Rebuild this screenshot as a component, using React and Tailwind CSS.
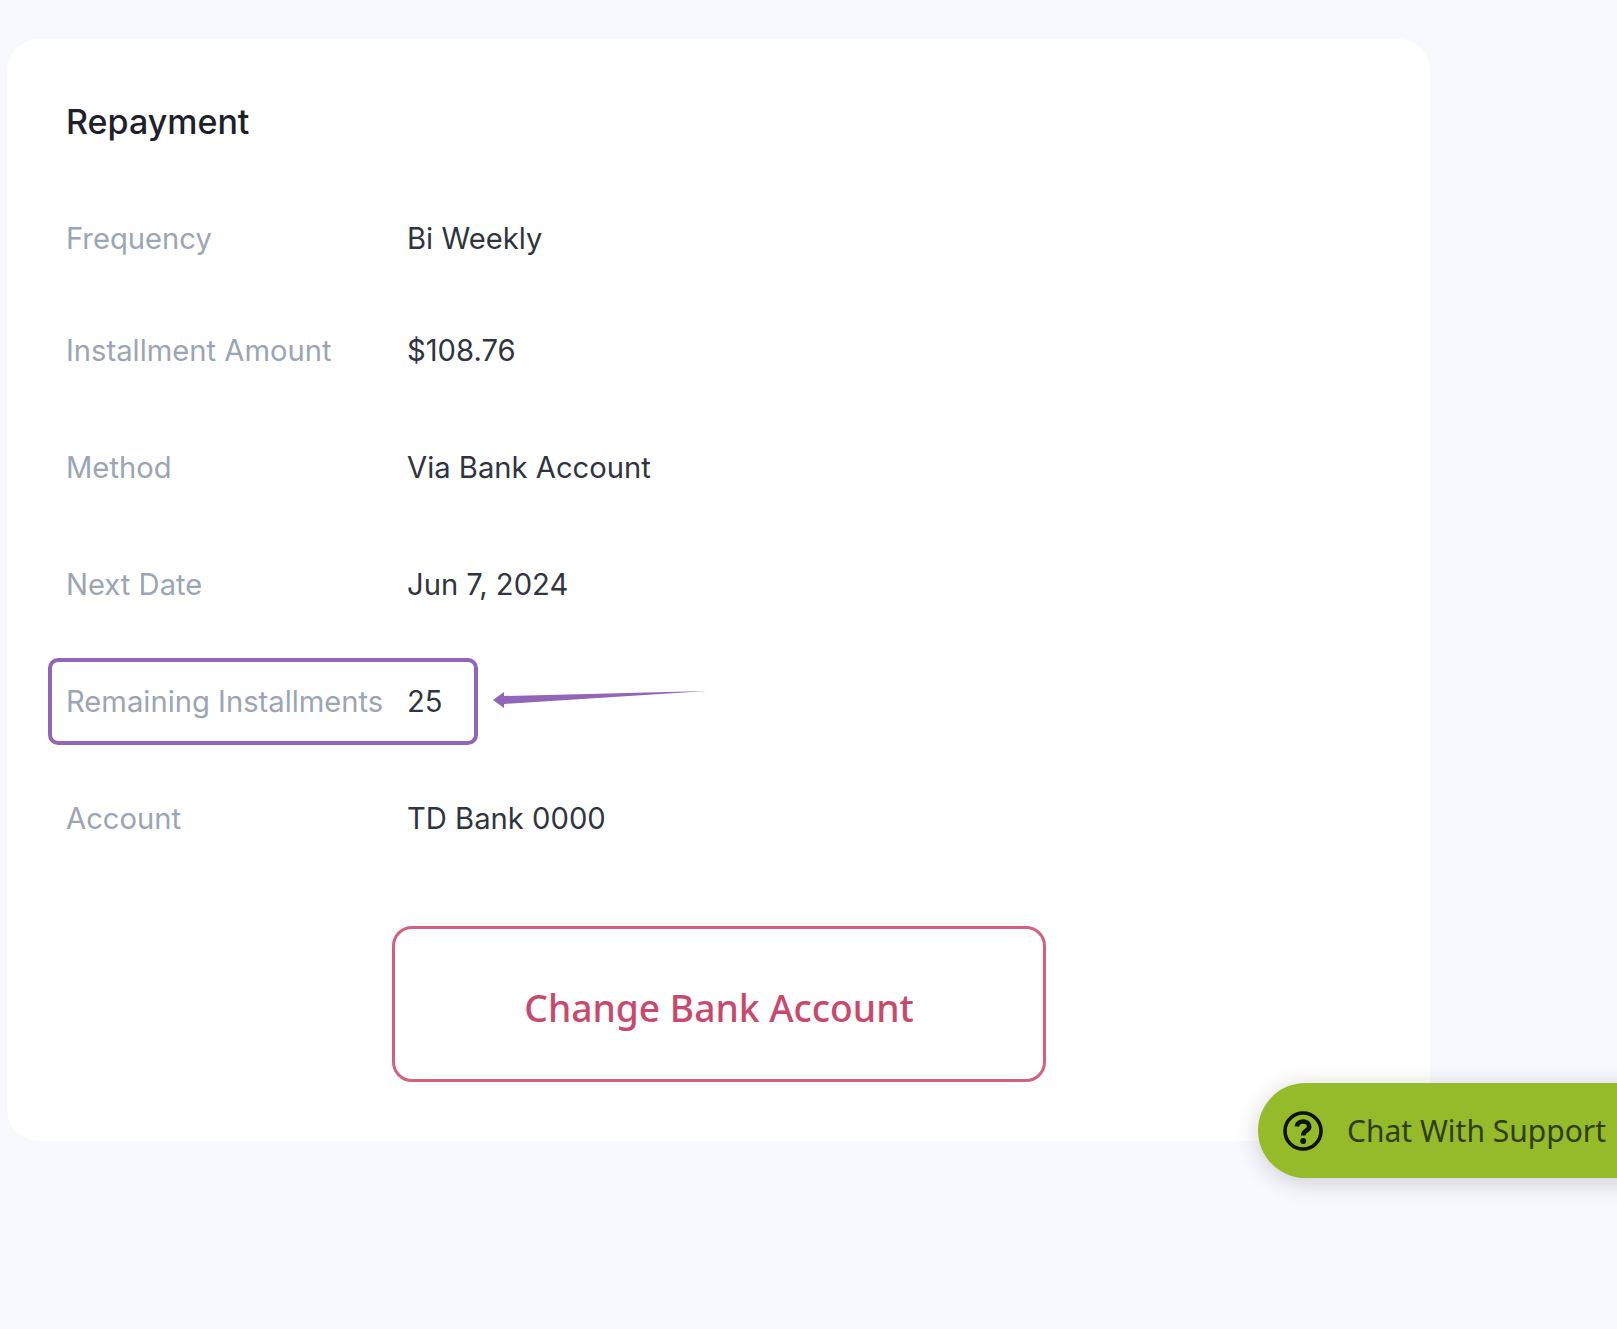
import React from "react";

const rows = [
  { label: "Frequency", value: "Bi Weekly", className: "mt-[77px]" },
  { label: "Installment Amount", value: "$108.76", className: "mt-[72px]" },
  { label: "Method", value: "Via Bank Account", className: "mt-[77px]" },
  { label: "Next Date", value: "Jun 7, 2024", className: "mt-[77px]" },
  { label: "Remaining Installments", value: "25", className: "mt-[77px]" },
  { label: "Account", value: "TD Bank 0000", className: "mt-[77px]" },
];

const Row = ({ label, value, className }) => (
  <div className={`relative flex h-10 items-center text-[29.2px] leading-10 ${className}`}>
    <span className="w-[341px] shrink-0 text-[#9aa5b5]">{label}</span>
    <span className="text-[#2f3440]">{value}</span>
    {label === "Remaining Installments" && (
      <>
        {/* annotation drawn on top of the screenshot */}
        <div className="absolute left-[-18px] top-[-24px] h-[87px] w-[430px] rounded-[10px] border-[4px] border-[#9265b8]" />
        <svg className="absolute left-[427px] top-[3px]" width="214" height="24" viewBox="0 0 214 24">
          <path d="M0 15 L11 7 L11 11 L214 6 L11 19 L11 23 Z" fill="#9265b8" />
        </svg>
      </>
    )}
  </div>
);

export default function App() {
  return (
    <div className="relative h-[1329px] overflow-hidden bg-[#f8f9fe] pl-[7px] pt-[39px] font-['Inter',sans-serif]">
      <div className="h-[1102px] w-[1423px] rounded-[32px] bg-white pl-[59px] pt-[63px]">
        <h2 className="h-10 text-[34px] font-medium leading-10 text-[#1d2129]">Repayment</h2>
        {rows.map((row) => (
          <Row key={row.label} {...row} />
        ))}
        <button className="ml-[326px] mt-[87px] block h-[156px] w-[654px] rounded-[20px] border-[3px] border-[#d4607f] bg-white pt-2 font-['Noto_Sans',sans-serif] text-[37.2px] font-medium text-[#c9496d]">
          Change Bank Account
        </button>
      </div>
      <div className="absolute left-[1258px] top-[1083px] flex h-[95px] w-[400px] items-center rounded-l-[48px] bg-[#95bb2a] pl-6 font-['Noto_Sans',sans-serif] text-[30px] text-[#2f3d10] shadow-[0_4px_24px_rgba(0,0,0,0.18)]">
        <svg width="42" height="42" viewBox="0 0 42 42" fill="none" stroke="#0c1204" className="shrink-0">
          <circle cx="21" cy="21" r="18" strokeWidth="3.6" />
          <path d="M14.8 16.5 C15.5 9.5 27.2 10 27.2 16.5 C27.2 21 21.2 20.5 21.2 25.5" strokeWidth="4.6" />
          <circle cx="21.2" cy="31" r="3" fill="#0c1204" stroke="none" />
        </svg>
        <span className="ml-[23px]">Chat With Support</span>
      </div>
    </div>
  );
}
